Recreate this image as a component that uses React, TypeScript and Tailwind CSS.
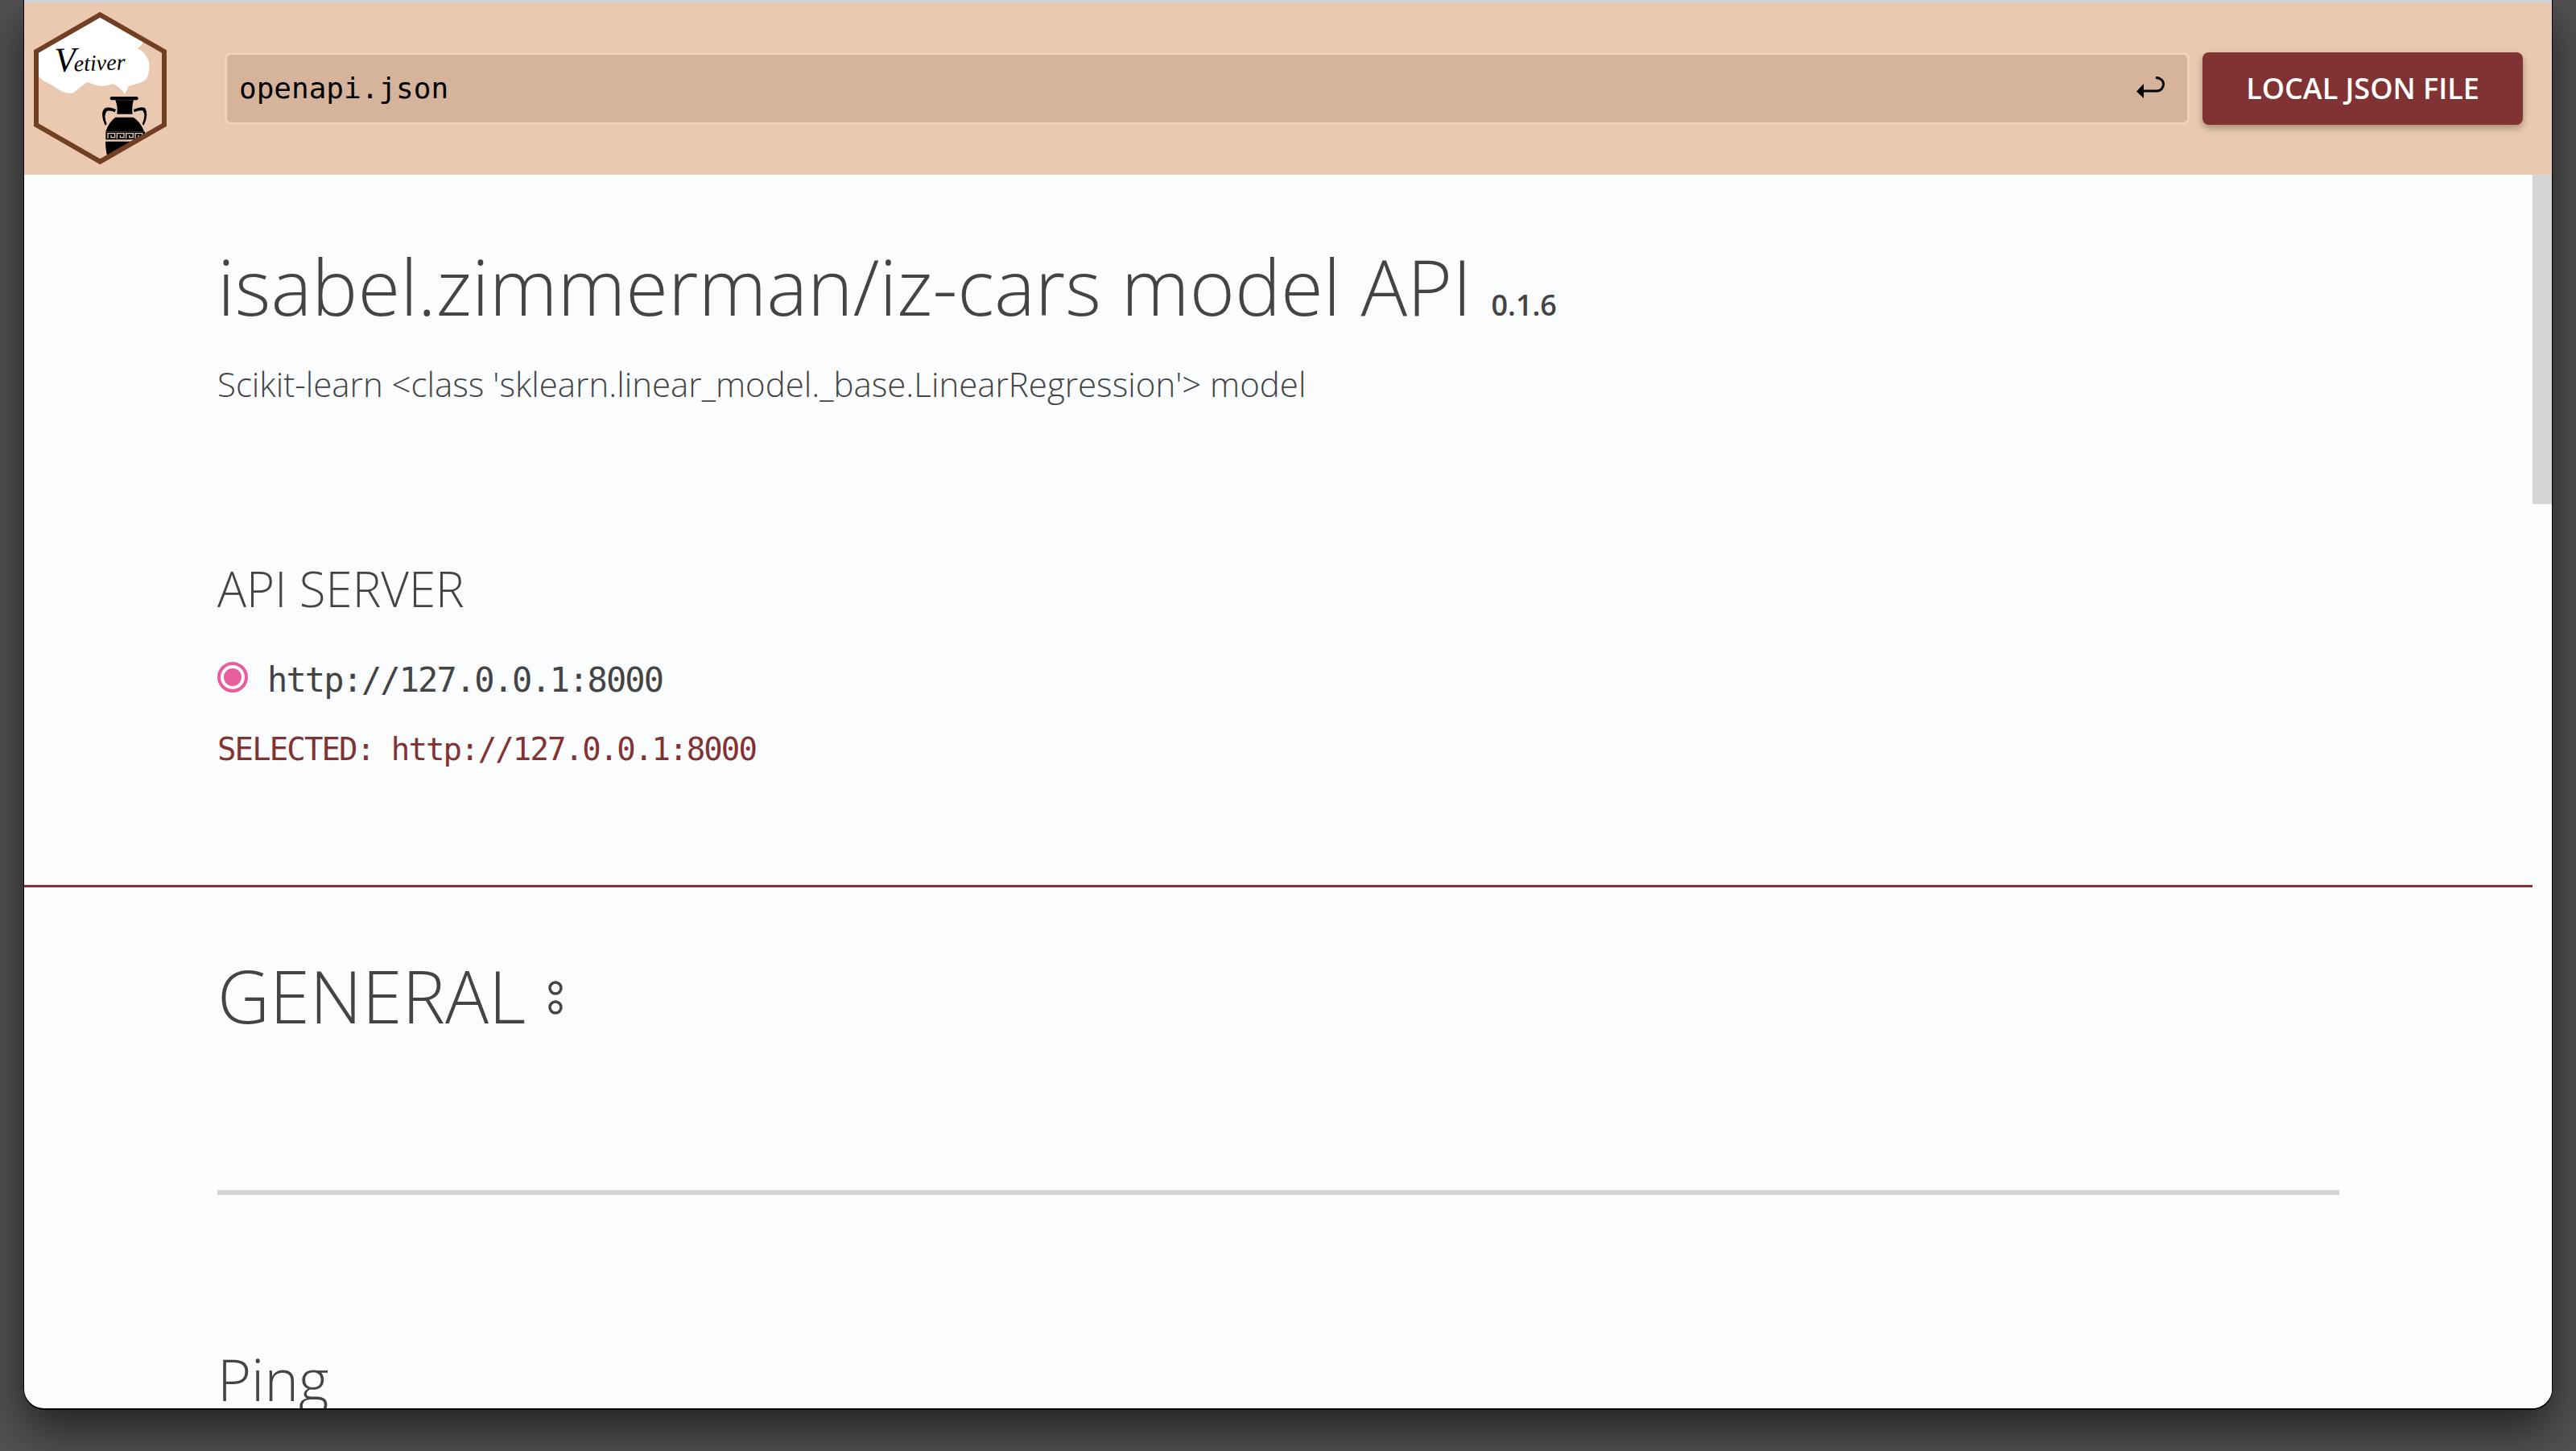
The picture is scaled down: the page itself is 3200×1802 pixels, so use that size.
const sans = "font-['Open_Sans',sans-serif]";
const mono = "font-['DejaVu_Sans_Mono',monospace]";

function Logo() {
  return (
    <svg viewBox="114 36 522 588" className="w-[174px] h-[196px] shrink-0 ml-[8px]">
      <defs>
        <clipPath id="hex">
          <polygon points="373,55 612,192 612,465 373,602 135,465 135,192" />
        </clipPath>
      </defs>
      <g clipPath="url(#hex)">
        <path
          fill="#ffffff"
          d="M373 50 L535 150 Q530 172 510 180 Q540 188 555 230 Q560 265 545 295 Q525 312 480 320 L465 352 Q452 325 420 312 Q385 328 350 315 L325 305 Q300 325 270 348 Q235 350 200 320 L160 300 L135 275 L135 190 Z"
        />
        <g fill="#000000">
          <rect x="410" y="360" width="105" height="13" rx="6" />
          <path d="M430 373 H498 Q490 400 494 425 H436 Q440 400 430 373 Z" />
          <path d="M430 437 H497 Q525 455 537 490 H394 Q405 455 430 437 Z" />
          <rect x="394" y="490" width="146" height="30" />
          <path d="M393 527 H540 V600 H405 Q393 565 393 527 Z" />
          <path d="M432 408 Q405 395 388 405 Q372 425 392 467 L398 462 Q385 430 398 414 Q412 410 428 418 Z" />
          <path d="M498 408 Q525 395 540 402 Q556 425 536 467 L530 462 Q545 430 532 412 Q515 410 500 418 Z" />
        </g>
        <g fill="none" stroke="#eac9b0" strokeWidth="4">
          <path d="M402 516 V497 H428 V512 H414 V504 M436 516 V497 H462 V512 H448 V504 M470 516 V497 H496 V512 H482 V504 M504 516 V497 H530 V512 H516 V504" />
        </g>
      </g>
      <polygon
        points="373,55 612,192 612,465 373,602 135,465 135,192"
        fill="none"
        stroke="#713f23"
        strokeWidth="18"
      />
      <text
        x="205"
        y="268"
        fontFamily="'Liberation Serif', serif"
        fontStyle="italic"
        fill="#000000"
        transform="rotate(-2 205 268)"
      >
        <tspan fontSize="130">V</tspan>
        <tspan fontSize="84" dx="-8">etiver</tspan>
      </text>
    </svg>
  );
}

function ReturnIcon() {
  return (
    <svg viewBox="0 0 35 27" className="w-[35px] h-[27px] mb-[4px]">
      <path d="M0 18.500 L9 9 V27 Z" fill="#000000" />
      <path
        d="M8 18 H25 C30 18 33.500 14.500 33.500 9.500 C33.500 4.500 29 1.500 24 1.500"
        fill="none"
        stroke="#000000"
        strokeWidth="3"
      />
    </svg>
  );
}

export default function App() {
  return (
    <div className="w-[3200px] h-[1802px] overflow-hidden bg-[#525252] pl-[29px]">
      <div className="w-[3142px] h-[1751px] overflow-hidden rounded-b-[26px] border-x border-b-2 border-black bg-[#fbfcfe] flex flex-col shadow-[0_24px_60px_rgba(0,0,0,0.6)]">
        <header className={`h-[217px] shrink-0 flex items-center bg-[#eac9b0] border-t-[3px] border-[#cbd5e0] ${sans}`}>
          <Logo />
          <div className="ml-[67px] w-[2441px] h-[90px] rounded-[8px] border-[3px] border-[#f1d3bb] bg-[#d6b49b] flex items-center justify-between pl-[15px] pr-[28px]">
            <span className={`text-[36px] text-black ${mono}`}>openapi.json</span>
            <ReturnIcon />
          </div>
          <button className="ml-[16px] w-[398px] h-[90px] rounded-[8px] bg-[#813333] text-white text-[36px] font-semibold shadow-[0_4px_8px_rgba(0,0,0,0.3)] uppercase">
            Local JSON File
          </button>
        </header>
        <div className="flex-1 flex min-h-0 overflow-hidden">
          <main className={`flex-1 min-w-0 text-[#444444] ${sans}`}>
            <div className="pl-[240px] pr-[240px] pt-[72px] pb-[140px]">
              <h1 className="text-[96px] leading-[132px] font-light whitespace-nowrap">
                isabel.zimmerman/iz-cars model API
                <span className="ml-[24px] text-[36px] font-semibold align-baseline">0.1.6</span>
              </h1>
              <p className="mt-[2px] text-[42px] leading-[60px] font-light">
                Scikit-learn &lt;class 'sklearn.linear_model._base.LinearRegression'&gt; model
              </p>
              <h2 className="mt-[186px] text-[60px] leading-[76px] font-light">API SERVER</h2>
              <div className="mt-[46px] flex items-center gap-[24px]">
                <span className="mb-[6px] w-[38px] h-[38px] rounded-full border-[4px] border-[#e85d9e] flex items-center justify-center">
                  <span className="w-[22px] h-[22px] rounded-full bg-[#e85d9e]" />
                </span>
                <span className={`pt-[2px] text-[42px] leading-[56px] tracking-[-1.9px] ${mono}`}>http://127.0.0.1:8000</span>
              </div>
              <p className={`mt-[30px] text-[39px] leading-[56px] tracking-[-1.9px] text-[#813333] ${mono}`}>
                SELECTED: http://127.0.0.1:8000
              </p>
            </div>
            <div className="h-[3px] bg-[#813333]" />
            <div className="pl-[240px] pr-[240px]">
              <div className="mt-[68px] flex items-center">
                <h2 className="text-[90px] leading-[132px] font-light">GENERAL</h2>
                <svg viewBox="0 0 20 44" className="ml-[27px] mt-[6px] w-[20px] h-[44px]">
                  <circle cx="10" cy="10" r="7" fill="none" stroke="#444444" strokeWidth="3.500" />
                  <circle cx="10" cy="34" r="7" fill="none" stroke="#444444" strokeWidth="3.500" />
                </svg>
              </div>
              <div className="mt-[176px] h-[6px] bg-[#d4d5d8]" />
              <h3 className="mt-[178px] text-[72px] leading-[100px] font-light">Ping</h3>
            </div>
          </main>
          <div className="w-[24px] shrink-0 bg-[#fbfcfe]">
            <div className="h-[409px] bg-[#d4d4d6]" />
          </div>
        </div>
      </div>
    </div>
  );
}
